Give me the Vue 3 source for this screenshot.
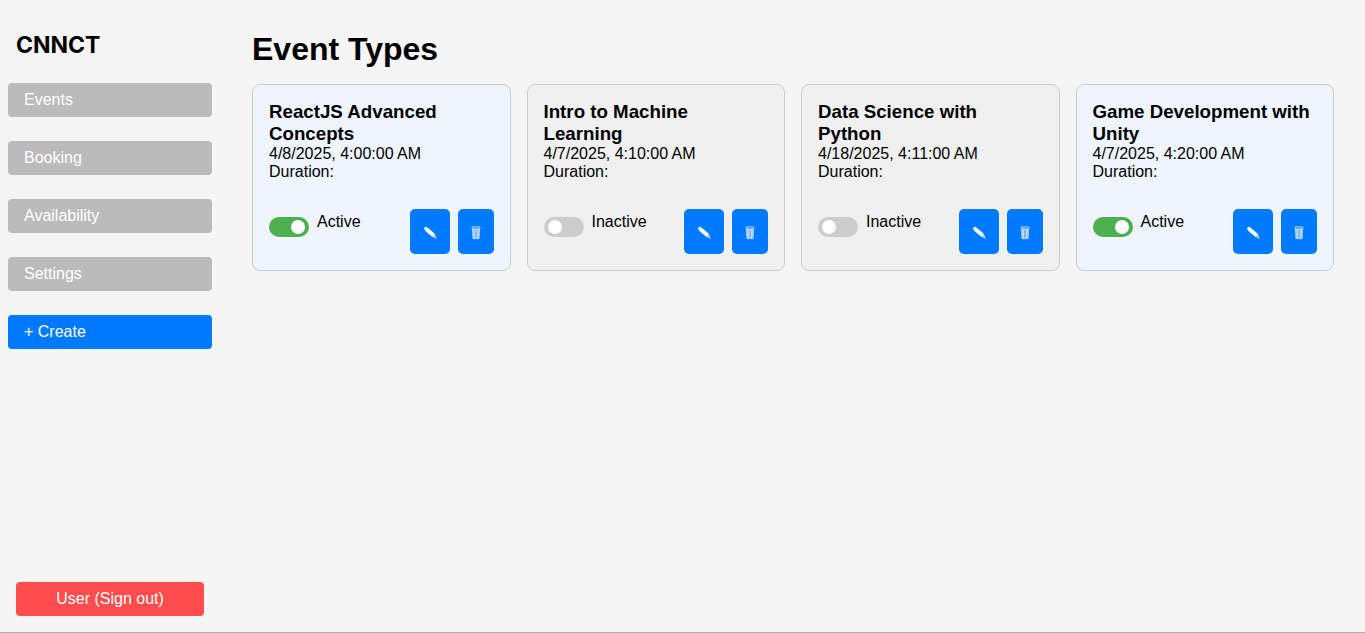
<script setup>
import { ref } from 'vue'

const links = ['Events', 'Booking', 'Availability', 'Settings']

const events = ref([
  { id: 1, title: 'ReactJS Advanced Concepts', date: '4/8/2025, 4:00:00 AM', active: true },
  { id: 2, title: 'Intro to Machine Learning', date: '4/7/2025, 4:10:00 AM', active: false },
  { id: 3, title: 'Data Science with Python', date: '4/18/2025, 4:11:00 AM', active: false },
  { id: 4, title: 'Game Development with Unity', date: '4/7/2025, 4:20:00 AM', active: true },
])
</script>

<template>
  <div class="page">
    <aside class="sidebar">
      <div class="brand">CNNCT</div>
      <nav class="menu">
        <a v-for="link in links" :key="link" href="#" class="menu-item">{{ link }}</a>
        <a href="#" class="menu-item create">+ Create</a>
      </nav>
      <button type="button" class="sign-out">User (Sign out)</button>
    </aside>

    <main class="content">
      <h1>Event Types</h1>
      <div class="cards">
        <article v-for="event in events" :key="event.id" class="card" :class="{ active: event.active }">
          <h3>{{ event.title }}</h3>
          <p>{{ event.date }}</p>
          <p>Duration:</p>
          <div class="controls">
            <input :id="'toggle-' + event.id" v-model="event.active" type="checkbox" class="toggle" />
            <label :for="'toggle-' + event.id">{{ event.active ? 'Active' : 'Inactive' }}</label>
            <div class="actions">
              <button type="button" class="action edit" aria-label="Edit">
                <svg width="14" height="14" viewBox="0 0 14 14">
                  <path d="M1 2.6Q1.4 1 3.1.8L5 2.1 12 8 9.6 10.9 2.4 5Z" fill="#fff" />
                  <path d="M9.6 10.9 12 8 13.4 12.6Z" fill="#b9d6ff" />
                  <path d="M11.9 11.8 12.9 10.9 13.5 12.8Z" fill="#fff" />
                  <path d="M2.7 4.7 4.7 2.3" stroke="#b4d5ff" stroke-width=".8" />
                </svg>
              </button>
              <button type="button" class="action remove" aria-label="Delete">
                <svg width="10" height="14" viewBox="0 0 10 14">
                  <path d="M1.5 2.5h7L8 12.6H2Z" fill="#8cc4ff" stroke="#c5e2ff" stroke-width=".9" />
                  <path d="M3.5 4v8M6.7 4v8" stroke="#d0e8ff" stroke-width=".9" />
                  <path d="M5.1 4v8" stroke="#8b95f0" />
                  <rect x="1" y=".9" width="8" height="2.2" rx="1" fill="#1c82f5" stroke="#d5e8ff" stroke-width=".9" />
                </svg>
              </button>
            </div>
          </div>
        </article>
      </div>
    </main>
  </div>
</template>

<style>
body {
  margin: 0;
  background: #f5f5f5;
}
</style>

<style scoped>
.page {
  display: flex;
  box-sizing: border-box;
  min-height: 100vh;
  border-bottom: 1px solid #b0b0b0;
  background: #f5f5f5;
  color: #000;
  font: 16px/18px "Liberation Sans", Arial, sans-serif;
}

.sidebar {
  display: flex;
  flex-direction: column;
  flex: 0 0 204px;
  padding: 30px 8px 16px;
}

.brand {
  margin: 0 8px 23px;
  font: 700 23px/30px Inter, sans-serif;
}

.menu {
  display: flex;
  flex-direction: column;
  gap: 24px;
}

.menu-item {
  padding: 8px 16px;
  border-radius: 4px;
  background: #bbb;
  color: #fff;
  text-decoration: none;
}

.create {
  background: #007bff;
}

.sign-out {
  margin: auto 8px 0;
  padding: 8px 16px;
  border: 0;
  border-radius: 4px;
  background: #ff4d4d;
  color: #fff;
  font: inherit;
}

.content {
  flex: 1;
  padding: 30px 31px 16px 32px;
}

h1 {
  margin: 0 0 16px;
  font-size: 32px;
  line-height: 38px;
}

.cards {
  display: grid;
  grid-template-columns: repeat(4, 1fr);
  gap: 16px;
}

.card {
  padding: 16px;
  border: 1px solid #ccc;
  border-radius: 8px;
  background: #f0f0f0;
}

.card.active {
  background: #eef5ff;
}

h3 {
  margin: 0;
  line-height: 22px;
}

p {
  margin: 0;
}

.controls {
  display: flex;
  align-items: flex-start;
  gap: 8px;
  margin-top: 28px;
}

.controls label {
  margin-top: 4px;
}

.toggle {
  appearance: none;
  flex: none;
  width: 40px;
  height: 20px;
  margin: 8px 0 0;
  padding: 3px;
  box-sizing: border-box;
  border-radius: 10px;
  background: #ccc;
}

.toggle::before {
  content: "";
  display: block;
  width: 14px;
  height: 14px;
  margin-left: 1px;
  border-radius: 50%;
  background: #fff;
}

.toggle:checked {
  background: #4caf50;
}

.toggle:checked::before {
  margin-left: 19px;
}

.actions {
  display: flex;
  gap: 8px;
  margin-left: auto;
}

.action {
  display: flex;
  align-items: center;
  justify-content: center;
  height: 45px;
  padding: 2px 0 0;
  border: 0;
  border-radius: 5px;
  background: #007bff;
}

.edit {
  width: 40px;
}

.remove {
  width: 36px;
}
</style>
